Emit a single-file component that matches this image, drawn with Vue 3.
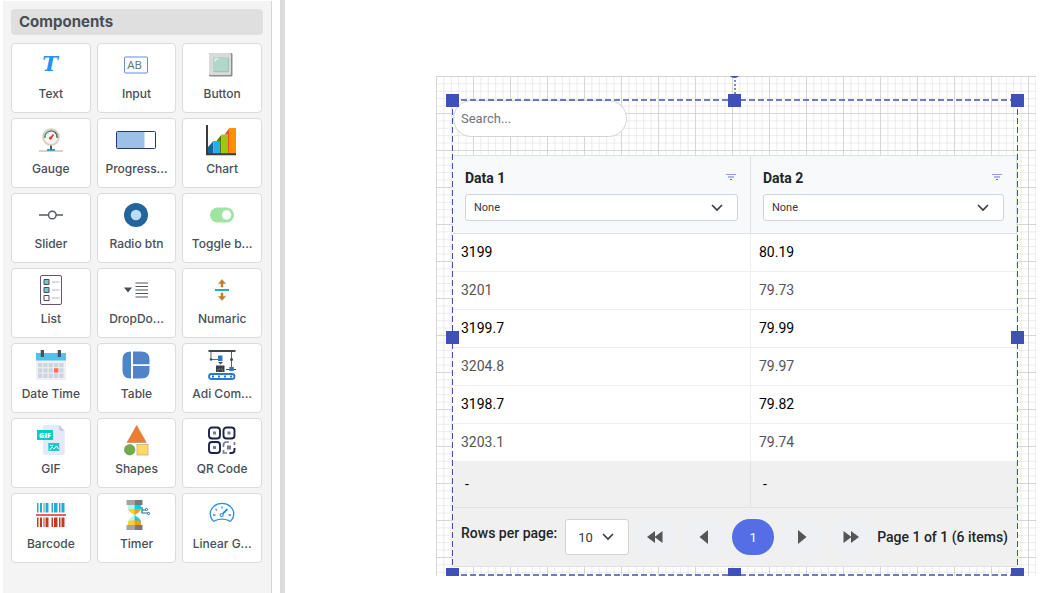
<script setup>
import { ref } from 'vue'

const search = ref('')
const rowsPerPage = ref('10')

const components = [
  {
    name: 'Text',
    icon: '<text x="23" y="21.500" text-anchor="middle" font-family="DejaVu Serif, serif" font-size="21" font-style="italic" font-weight="700" fill="#2493f6">T</text>'
  },
  {
    name: 'Input',
    icon: '<rect x="12.5" y="8" width="23" height="16" rx="1" fill="#fff" stroke="#6c8ad6"/><text x="22.5" y="19.7" text-anchor="middle" font-family="Open Sans, sans-serif" font-size="11.500" fill="#5a756c">AB</text>'
  },
  {
    name: 'Button',
    icon: '<rect x="11" y="4" width="23.5" height="23.5" rx="1.5" fill="#8d8d8d"/><rect x="11" y="4" width="22" height="22" rx="1.5" fill="#dadada"/><rect x="15" y="8" width="16" height="15.5" rx="2" fill="#b2d6ca"/><path d="M15.5 22.5h15V9" fill="none" stroke="#9cc5b7"/><path d="M17 12.5v-1.500q0-1 1-1h2" fill="none" stroke="#fff"/>'
  },
  {
    name: 'Gauge',
    icon: '<path d="M12 27h24" stroke="#d3c8b0" stroke-width="1.6"/><path d="M20 26h8" stroke="#35a5c4" stroke-width="2"/><path d="M24 21v4.500" stroke="#4a5560" stroke-width="2"/><circle cx="24" cy="13" r="8.800" fill="#d9cdb8"/><circle cx="24" cy="13" r="7" fill="#f6f4f1"/><path d="M18 14a6 6 0 0 1 4-6.700" fill="none" stroke="#3c8583" stroke-width="1.400"/><path d="M22 7.300a6 6 0 0 1 8 6.700" fill="none" stroke="#59606a" stroke-width="1.400"/><path d="m23 15 3.500-4.500" stroke="#dd3b32" stroke-width="1.700"/><circle cx="23.500" cy="14" r="1.500" fill="#dd3b32"/>'
  },
  {
    name: 'Progress...',
    icon: '<rect x="4.500" y="7.500" width="39" height="17" rx="1" fill="#fff"/><path d="M5 8h27.500v16H5z" fill="#9dc0e6"/><rect x="4.500" y="7.500" width="39" height="17" rx="1" fill="none" stroke="#20386c"/>'
  },
  {
    name: 'Chart',
    icon: '<path d="m10 23 5.500-6v13H10z" fill="#16669c"/><path d="M15.500 17H22v13h-6.500z" fill="#25aef3"/><path d="m18.500 17 5-6.500V30H22V17z" fill="#61750c"/><path d="M23.500 10.500h7V30h-7z" fill="#9bc910"/><path d="m26.500 10.500 5-6.500v26h-1.500V10.500z" fill="#f4511e"/><path d="M31 4h7v26h-7z" fill="#ff9100"/><path d="M9 1v29.300h29" fill="none" stroke="#3a3a40" stroke-width="2"/>'
  },
  {
    name: 'Slider',
    icon: '<path d="M12 16h9.500M29 16h7" stroke="#535b62" stroke-width="1.400"/><circle cx="25.300" cy="16" r="3.800" fill="#fff" stroke="#535b62" stroke-width="1.400"/>'
  },
  {
    name: 'Radio btn',
    icon: '<circle cx="24" cy="16" r="12" fill="#22659c"/><circle cx="24" cy="16" r="5.300" fill="#badcf7"/>'
  },
  {
    name: 'Toggle b...',
    icon: '<rect x="12" y="8.500" width="24" height="15" rx="7.500" fill="#9fe4a0"/><circle cx="28.500" cy="16" r="4.700" fill="#fff"/>'
  },
  {
    name: 'List',
    icon: '<rect x="13.500" y="1.500" width="21" height="29" rx="1.500" fill="#fff" stroke="#69526b"/><path d="M17 5.500h5v5h-5zM17 13.500h5v5h-5z" fill="#70ccc7" stroke="#54445c"/><path d="M17 21.500h5v5h-5z" fill="#fff" stroke="#54445c"/><path d="M25 8h7.500M25 16h7.500M25 24h7.500" stroke="#d3cdd6" stroke-width="1.600"/>'
  },
  {
    name: 'DropDo...',
    icon: '<path d="M12 13.500h8l-4 5z" fill="#474e55"/><path d="M23.500 9h12.500M23.500 12.500h12.500M23.500 16h12.500M23.500 19.500h12.500M23.500 23h12.500" stroke="#50575e" stroke-width="1.200"/>'
  },
  {
    name: 'Numaric',
    icon: '<path d="M17 16h14" stroke="#2aa9bd" stroke-width="2"/><path d="m24 5.500 3.500 4H25v3.500h-2V9.500h-2.500zM24 26.500l3.500-4H25V19h-2v3.500h-2.500z" fill="#c17c28" stroke="#c17c28" stroke-width=".5"/>'
  },
  {
    name: 'Date Time',
    icon: '<path d="M9 4h30v27H9z" fill="#f0f0f2"/><path d="M9 4h30v7.500H9z" fill="#55bfee"/><path d="M13.700 1h3.300v7h-3.300zM30.700 1H34v7h-3.300z" fill="#445463"/><path d="M13.200 14v15.500M18.500 14v15.500M23.800 14v15.500M29.100 14v15.500M34.400 14v15.500" stroke="#ccd5df" stroke-width="4.300" stroke-dasharray="4.300 1"/><path d="M27 19.300h4.300v4.300H27z" fill="#ff6b55"/>'
  },
  {
    name: 'Table',
    icon: '<path d="M19 2.500v27q-8.500 0-8.500-8v-11q0-8 8.500-8zM21 2.500h8q8.500 0 8.500 8v4.700H21zM21 17h16.500v4.500q0 8-8.500 8h-8z" fill="#4f84c8"/>'
  },
  {
    name: 'Adi Com...',
    icon: '<path d="M10.500 2h27" stroke="#41484f" stroke-width="2"/><path d="M13 3v7M33.500 3v15" stroke="#59626b"/><path d="M13 10.500h9" stroke="#2b78c6"/><path d="M20 6.500h4.500V12H20z" fill="#2b78c6"/><path d="M20 13h5l-2.500 2.500z" fill="#41484f"/><circle cx="13" cy="10.500" r="1.200" fill="#41484f"/><circle cx="33.500" cy="10.500" r="1.500" fill="#41484f"/><path d="M18 16.500h8.500V23H18z" fill="#3a3e45"/><path d="M20 23v-3h4.500v3" fill="none" stroke="#8c9299" stroke-dasharray="1 1"/><path d="M28 20.500h10" stroke="#41484f"/><path d="M31.300 18h4.500v4h-4.500z" fill="#2b78c6"/><rect x="11" y="25" width="25.500" height="5" rx="2.500" fill="#fff" stroke="#2b78c6" stroke-width="1.800"/><path d="M14 27.500h20" stroke="#2b78c6" stroke-width="2" stroke-dasharray="2 4"/>'
  },
  {
    name: 'GIF',
    icon: '<path d="M16 3q0-2 2-2h14l5.700 6v22q0 2-2 2H18q-2 0-2-2z" fill="#e3e9f8"/><path d="M32 1v4q0 2 2 2h3.700z" fill="#c3cde4"/><path d="M10 6h16v10H10z" fill="#00cecb"/><text x="18" y="13.600" text-anchor="middle" font-family="Open Sans, sans-serif" font-size="7.500" font-weight="800" fill="#fff">GIF</text><path d="M21.300 19h11v8h-11z" fill="#1bc9cd"/><path d="m22.500 26 2.500-3 2 2 2.500-3 2 3M23 21.500h3" fill="none" stroke="#fff"/>'
  },
  {
    name: 'Shapes',
    icon: '<path d="M24.700 1.500 34.300 18.500H15z" fill="#ed7d31" stroke="#b98561" stroke-width=".6"/><circle cx="17.700" cy="25.700" r="5.300" fill="#70ad47" stroke="#6f8e5a" stroke-width=".6"/><rect x="25" y="20.500" width="11" height="10.500" fill="#ffd966" stroke="#b5a878" stroke-width=".7"/>'
  },
  {
    name: 'QR Code',
    icon: '<g fill="none" stroke="#1d2347" stroke-width="1.900"><rect x="11" y="3.500" width="11" height="11" rx="3"/><rect x="25.500" y="3.500" width="11" height="11" rx="3"/><rect x="11" y="18" width="11" height="11" rx="3"/><path d="M36.500 24v2q0 3-3 3h-2"/></g><path d="M25.500 23v-2q0-3 3-3H31M25.500 26v3H29M36.500 18v3" fill="none" stroke="#777b95" stroke-width="1.700"/><path d="M15 7.500h3v3h-3zM29.500 7.500h3v3h-3zM15 22h3v3h-3zM29 21.500h4v4h-4z" fill="#777b95"/>'
  },
  {
    name: 'Barcode',
    icon: '<path d="M10 4h1.500v9.500H10zM13 4h2v9.500h-2zM16.500 4h1v9.500h-1zM18.500 4h3v9.500h-3zM24.500 4H26v9.500h-1.500zM27 4h3.500v9.500H27zM32 4h1.500v9.500H32zM34.500 4h3v9.500h-3z" fill="#2aa6d6"/><path d="M10 18.500h1.500V28H10zM13 18.500h2V28h-2zM16.500 18.500h1V28h-1zM18.500 18.500h3V28h-3zM24.500 18.500H26V28h-1.500zM27 18.500h3.500V28H27zM32 18.500h1.500V28H32zM34.500 18.500h3V28h-3z" fill="#c0392b"/><path d="M9 16h30" stroke="#e8625a" stroke-width="2"/>'
  },
  {
    name: 'Timer',
    icon: '<path d="M16 6v3q0 3 6.500 7-6.500 4-6.500 7v3h6.500V6z" fill="#b5f4fb"/><path d="M29 6v3q0 3-6.500 7 6.500 4 6.500 7v3h-6.500V6z" fill="#00d3e6"/><path d="M16 10h6.500v6Q17 13 16 10zM16 26v-4l6.500-1v5z" fill="#ffd02e"/><path d="M22.500 10H29q-1 3-6.500 6zM22.500 21l6.500 1v4h-6.500z" fill="#ff9c12"/><path d="M14.500 1h8v5h-8zM14.500 26h8v5h-8z" fill="#a2a4a8"/><path d="M22.500 1h8v5h-8zM22.500 26h8v5h-8z" fill="#75787e"/><path d="M30 8v6h6M30 11h4" fill="none" stroke="#2f6d94" stroke-width="1.200"/><circle cx="34.500" cy="10.500" r="1.100" fill="#fff" stroke="#2f6d94"/><circle cx="36.500" cy="14.500" r="1.100" fill="#fff" stroke="#2f6d94"/>'
  },
  {
    name: 'Linear G...',
    icon: '<path d="M15 21.700q-2.800-3-2.800-6.700a11.800 10.700 0 0 1 23.600 0q0 3.700-2.800 6.700-1 .8-2 0-7-3-14 0-1 .8-2 0z" fill="none" stroke="#2b8ff2" stroke-width="1.300"/><path d="M24 7.500v2M17.500 10l1.500 1.500M15 16h2.500M30.500 16H33" stroke="#2b8ff2" stroke-width="1.300"/><path d="m24.500 15 5-5" stroke="#2b8ff2" stroke-width="1.800"/><circle cx="23.700" cy="16" r="1.500" fill="#fff" stroke="#2b8ff2" stroke-width="1.200"/>'
  }
]

const columns = ref([
  { id: 'data-1', title: 'Data 1', filter: 'None' },
  { id: 'data-2', title: 'Data 2', filter: 'None' }
])

const rows = [
  ['3199', '80.19'],
  ['3201', '79.73'],
  ['3199.7', '79.99'],
  ['3204.8', '79.97'],
  ['3198.7', '79.82'],
  ['3203.1', '79.74']
]

const handles = ['nw', 'n', 'ne', 'w', 'e', 'sw', 's', 'se']
</script>
<template>
  <div class="editor">
    <aside class="sidebar">
      <h2 class="sidebar-title">Components</h2>
      <div class="tiles">
        <button class="tile" type="button" v-for="item in components" :key="item.name">
          <svg class="tile-icon" viewBox="0 0 48 32" aria-hidden="true" v-html="item.icon"></svg>
          <span class="tile-name">{{ item.name }}</span>
        </button>
      </div>
    </aside>
    <main class="workspace">
      <div class="canvas">
        <svg class="canvas-grid" aria-hidden="true">
          <defs>
            <pattern id="minor" width="7.4" height="7.4" patternUnits="userSpaceOnUse">
              <path d="M7.4 0H0V7.4" fill="none" stroke="#d8d8d8" stroke-width="1" />
            </pattern>
            <pattern id="major" width="37" height="37" patternUnits="userSpaceOnUse">
              <rect width="37" height="37" fill="url(#minor)" />
              <path d="M37 0H0V37" fill="none" stroke="#d6d6d6" stroke-width="2" />
            </pattern>
          </defs>
          <rect width="100%" height="100%" fill="url(#major)" />
        </svg>
        <section class="widget">
          <input class="search" type="text" placeholder="Search..." aria-label="Search" v-model="search" />
          <table class="table">
            <colgroup>
              <col />
              <col class="col-last" />
            </colgroup>
            <thead>
              <tr>
                <th v-for="column in columns" :key="column.id">
                  <div class="head">
                    <label :for="column.id">{{ column.title }}</label>
                    <button class="filter" type="button" aria-label="Filter">
                      <svg width="10" height="8" viewBox="0 0 10 8">
                        <path d="M0 1.500h10" stroke="#9299ee" />
                        <path d="M2 4h6" stroke="#6770e0" />
                        <path d="M4 6.500h2" stroke="#5660dc" />
                      </svg>
                    </button>
                  </div>
                  <div class="select">
                    <select :id="column.id" v-model="column.filter">
                      <option>None</option>
                    </select>
                    <svg class="chevron" viewBox="0 0 12 8">
                      <path d="m1 1 5 5 5-5" fill="none" stroke="#343a40" stroke-width="1.600" />
                    </svg>
                  </div>
                </th>
              </tr>
            </thead>
            <tbody>
              <tr v-for="(row, i) in rows" :key="i">
                <td v-for="(value, j) in row" :key="j">{{ value }}</td>
              </tr>
            </tbody>
            <tfoot>
              <tr>
                <td>-</td>
                <td>-</td>
              </tr>
            </tfoot>
          </table>
          <div class="pager">
            <label class="pager-label" for="rows">Rows per page:</label>
            <div class="select select-rows">
              <select id="rows" v-model="rowsPerPage">
                <option>10</option>
              </select>
              <svg class="chevron" viewBox="0 0 12 8">
                <path d="m1 1 5 5 5-5" fill="none" stroke="#343a40" stroke-width="1.600" />
              </svg>
            </div>
            <nav class="pages">
              <button class="page" type="button" aria-label="First page">
                <svg width="16" height="14" viewBox="0 0 16 14"><path d="M8 1v12L0 7zM15.500 1v12l-8-6z" /></svg>
              </button>
              <button class="page" type="button" aria-label="Previous page">
                <svg width="16" height="14" viewBox="0 0 16 14"><path d="M12 0v14L3.500 7z" /></svg>
              </button>
              <button class="page active" type="button">1</button>
              <button class="page" type="button" aria-label="Next page">
                <svg width="16" height="14" viewBox="0 0 16 14"><path d="M4 0v14l8.500-7z" /></svg>
              </button>
              <button class="page" type="button" aria-label="Last page">
                <svg width="16" height="14" viewBox="0 0 16 14"><path d="M.5 1v12l8-6zM8 1v12l8-6z" /></svg>
              </button>
            </nav>
            <span class="pager-info">Page 1 of 1 (6 items)</span>
          </div>
          <div class="selection">
            <svg class="outline" aria-hidden="true">
              <line x1="0" y1="0" x2="100%" y2="0" />
              <line x1="0" y1="100%" x2="100%" y2="100%" />
              <line class="side" x1="0" y1="0" x2="0" y2="100%" transform="translate(0.5 0)" />
              <line class="side" x1="100%" y1="0" x2="100%" y2="100%" transform="translate(-0.5 0)" />
            </svg>
            <span class="rotate-line"></span>
            <span class="rotate"></span>
            <span class="handle" :class="handle" v-for="handle in handles" :key="handle"></span>
          </div>
        </section>
      </div>
    </main>
  </div>
</template>
<style>
body {
  margin: 0;
  background: #fff;
}
</style>
<style scoped>
* {
  box-sizing: border-box;
}
button,
input,
select {
  font-family: inherit;
}
.editor {
  display: flex;
  min-height: 100vh;
  font-family: Roboto, 'Liberation Sans', sans-serif;
}
.sidebar {
  flex: none;
  width: 269px;
  margin: 1px 8px 0 3px;
  padding: 8px;
  background: #f4f4f4;
  border-right: 1px solid #d6d6d6;
  font-family: Inter, 'Open Sans', sans-serif;
  color: #484e56;
}
.sidebar-title {
  margin: 0 0 8px;
  padding: 0 8px;
  border-radius: 4px;
  background: #dfdfdf;
  font-size: 15px;
  font-weight: 700;
  line-height: 26px;
}
.tiles {
  display: grid;
  grid-template-columns: repeat(3, 1fr);
  gap: 5px 6px;
  padding-right: 1px;
}
.tile {
  display: flex;
  flex-direction: column;
  align-items: center;
  gap: 3px;
  height: 70px;
  padding: 5px 0 0;
  border: 1px solid #dbdbdb;
  border-radius: 4px;
  background: #fff;
  color: inherit;
  cursor: pointer;
}
.tile-icon {
  width: 48px;
  height: 32px;
}
.tile-name {
  font-size: 12px;
  font-weight: 500;
  line-height: 20px;
  white-space: nowrap;
}
.workspace {
  flex: 1;
  min-width: 0;
  padding: 76px 24px 17px 151px;
  border-left: 5px solid #dcdcdc;
}
.canvas {
  position: relative;
  display: flow-root;
  overflow: hidden;
}
.canvas-grid {
  position: absolute;
  inset: 0;
  width: 100%;
  height: 100%;
}
.widget {
  position: relative;
  margin: 24px 18px 0 16px;
  padding: 0 1px 9px;
}
.search {
  display: block;
  width: 174px;
  height: 37px;
  margin-bottom: 18px;
  padding: 0 7px;
  border: 1px solid #ced4da;
  border-radius: 19px;
  background: #fff;
  color: #495057;
  font-size: 13px;
}
.search::placeholder {
  color: #6c757d;
}
.table {
  width: 100%;
  table-layout: fixed;
  border-collapse: separate;
  border-spacing: 0;
  font-size: 14px;
  color: #000;
}
.col-last {
  width: 266px;
}
th {
  padding: 12px;
  border: solid #dee2e6;
  border-width: 1px 1px 1px 0;
  background: #f8f9fa;
  color: #212529;
  text-align: left;
}
.head {
  display: flex;
  align-items: center;
  justify-content: space-between;
  height: 20px;
  margin-bottom: 6px;
}
.filter {
  display: flex;
  padding: 0 2px 2px;
  border: 0;
  background: none;
}
.select {
  position: relative;
}
.select select {
  display: block;
  width: 100%;
  height: 27px;
  padding: 0 8px;
  border: 1px solid #ced4da;
  border-radius: 3px;
  background: #fff;
  color: #343a40;
  font-size: 11px;
  appearance: none;
}
.chevron {
  position: absolute;
  top: 50%;
  right: 15px;
  width: 12px;
  height: 8px;
  margin-top: -4px;
  pointer-events: none;
}
td {
  height: 38px;
  padding: 0 8px 2px;
  border: solid #eceff3;
  border-width: 0 1px 1px 0;
  background: #fff;
}
tbody tr:nth-child(even) td {
  color: #555;
}
tbody tr:last-child td {
  border-bottom-color: #f0f0f0;
}
tfoot td {
  height: 46px;
  padding: 0 12px 2px;
  border-color: #dee2e6;
  background: #f0f0f0;
}
.pager {
  display: flex;
  align-items: center;
  height: 59px;
  padding: 0 9px 0 8px;
  border-bottom: 1px solid #dee2e6;
  background: #f0f0f0;
  color: #212529;
  font-size: 14px;
  font-weight: 500;
  white-space: nowrap;
}
.pager-label {
  padding-bottom: 8px;
}
.select-rows {
  width: 64px;
  margin-left: 8px;
}
.select-rows select {
  height: 36px;
  padding: 0 12px;
  font-size: 13px;
}
.pages {
  display: flex;
  flex: 1;
  align-items: center;
  justify-content: center;
  gap: 7px;
}
.page {
  display: flex;
  align-items: center;
  justify-content: center;
  width: 42px;
  height: 42px;
  padding: 0;
  border: 0;
  border-radius: 21px;
  background: #eff0f4;
  fill: #555;
  cursor: pointer;
}
.page.active {
  height: 36px;
  border-radius: 18px;
  background: #556ee6;
  color: #fff;
  font-size: 13px;
}
.selection {
  position: absolute;
  inset: 0 0 1px;
  pointer-events: none;
}
.outline {
  display: block;
  width: 100%;
  height: 100%;
  overflow: visible;
}
.outline line {
  stroke: #3f51b5;
  stroke-width: 1.5px;
  stroke-dasharray: 6 3;
}
.outline .side {
  stroke-width: 1px;
}
.handle {
  position: absolute;
  width: 13px;
  height: 13px;
  margin: -6px;
  background: #3f51b5;
}
.nw,
.n,
.ne {
  top: 0;
}
.w,
.e {
  top: 50%;
  margin-top: -7px;
}
.sw,
.s,
.se {
  bottom: 0;
}
.nw,
.w,
.sw {
  left: 0;
}
.n,
.s {
  left: 50%;
  margin-left: -7px;
}
.ne,
.e,
.se {
  right: 0;
}
.rotate-line {
  position: absolute;
  top: -20px;
  left: 50%;
  height: 14px;
  margin-left: -1px;
  border-left: 2px dotted #7b87cc;
}
.rotate {
  position: absolute;
  top: -35px;
  left: 50%;
  width: 13px;
  height: 13px;
  margin-left: -7px;
  border: 2px solid #3f51b5;
  border-radius: 50%;
}
</style>
